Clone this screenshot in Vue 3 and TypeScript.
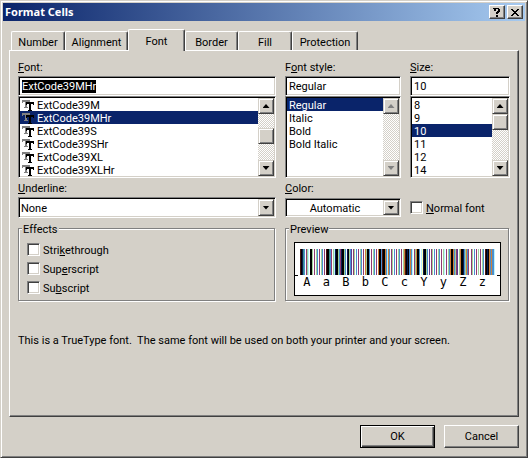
<script setup lang="ts">
import { nextTick, onMounted, ref } from 'vue'

const tabs = ['Number', 'Alignment', 'Font', 'Border', 'Fill', 'Protection']
const activeTab = ref('Font')

const fonts = ['ExtCode39M', 'ExtCode39MHr', 'ExtCode39S', 'ExtCode39SHr', 'ExtCode39XL', 'ExtCode39XLHr']
const styles = ['Regular', 'Italic', 'Bold', 'Bold Italic']
const sizes = ['8', '9', '10', '11', '12', '14']

const font = ref('ExtCode39MHr')
const fontStyle = ref('Regular')
const size = ref('10')
const underline = ref('None')
const color = ref('Automatic')
const normalFont = ref(false)
const strikethrough = ref(false)
const superscript = ref(false)
const subscript = ref(false)

const sample = ['A', 'a', 'B', 'b', 'C', 'c', 'Y', 'y', 'Z', 'z']

// One letter per pixel column of the bar code; '.' is a blank column.
const palette: Record<string, string> = {
  k: '#000000', r: '#4a1410', n: '#0a1a50', p: '#8f3a70', g: '#9fd09a',
  b: '#4a90d0', c: '#b8f4ff', o: '#d08038', y: '#ffffb0', t: '#3a8f8a', v: '#5a3a90',
}
const columns =
  'rkntb.pgc.kkg.p.gb.p.gb.p.rkkt' +
  'bp.gcnkkgbpnkkgb.nkgbv.pg.b.p.' +
  'gb.p.ogkkb.p.gb.p.okkbrkkobcob' +
  '.pg.b.p.gb.p.gorknkbobc.pgokkb' +
  '.cynkkgb.v.pg.b.p.gb.p.gc.p.gb' +
  'okkobgpv.gokknbgobp..pg.b.p.g.' +
  'p.gb.rknkobobbc'
const bars = columns
  .split('')
  .map((key, x) => ({ x, fill: palette[key] }))
  .filter((bar) => bar.fill)

const fontInput = ref<HTMLInputElement | null>(null)
onMounted(async () => {
  await nextTick()
  fontInput.value?.focus()
  fontInput.value?.select()
})
</script>

<template>
  <main class="dialog" role="dialog" aria-labelledby="title">
    <header class="titlebar">
      <h1 id="title">Format Cells</h1>
      <div class="caption">
        <button class="raised cap" type="button" aria-label="Help">
          <svg width="8" height="9" viewBox="0 0 8 9" shape-rendering="crispEdges">
            <path d="M1 0h5v1h1v3h-1v1h-1v1h-2v-2h1v-1h1v-2h-2v2h-2v-2h-1v-1h1zM3 7h2v2h-2z" />
          </svg>
        </button>
        <button class="raised cap" type="button" aria-label="Close">
          <svg width="8" height="7" viewBox="0 0 8 7" shape-rendering="crispEdges">
            <path d="M0 0h2v1h1v1h2v-1h1v-1h2v1h-1v1h-1v1h-1v1h1v1h1v1h1v1h-2v-1h-1v-1h-2v1h-1v1h-2v-1h1v-1h1v-1h1v-1h-1v-1h-1v-1h-1z" />
          </svg>
        </button>
      </div>
    </header>

    <div class="body">
      <div class="tabs" role="tablist">
        <button
          v-for="tab in tabs"
          :key="tab"
          class="tab"
          :class="{ active: tab === activeTab }"
          type="button"
          role="tab"
          :aria-selected="tab === activeTab"
          @click="activeTab = tab"
        >{{ tab }}</button>
      </div>

      <section class="panel" role="tabpanel">
        <div class="columns">
          <div class="field">
            <label for="font"><u>F</u>ont:</label>
            <input id="font" ref="fontInput" v-model="font" class="sunken text" type="text" />
            <div class="sunken list">
              <ul role="listbox" aria-label="Font">
                <li
                  v-for="name in fonts"
                  :key="name"
                  role="option"
                  :aria-selected="name === font"
                  @click="font = name"
                >
                  <svg width="13" height="11" viewBox="0 0 13 11" shape-rendering="crispEdges">
                    <path class="back" d="M0 0h8v3h-1v-1h-2v5h1v1h-4v-1h1v-5h-2v1h-1z" />
                    <path class="front" d="M4 2h8v3h-1v-1h-2v6h1v1h-4v-1h1v-6h-2v1h-1z" />
                  </svg>{{ name }}
                </li>
              </ul>
              <div class="scroll">
                <button class="raised" type="button" aria-label="Scroll fonts up"><i class="arrow up"></i></button>
                <div class="track middle"><span class="raised thumb"></span></div>
                <button class="raised" type="button" aria-label="Scroll fonts down"><i class="arrow"></i></button>
              </div>
            </div>
          </div>

          <div class="field">
            <label for="style">F<u>o</u>nt style:</label>
            <input id="style" v-model="fontStyle" class="sunken text" type="text" />
            <div class="sunken list">
              <ul role="listbox" aria-label="Font style">
                <li
                  v-for="name in styles"
                  :key="name"
                  role="option"
                  :aria-selected="name === fontStyle"
                  @click="fontStyle = name"
                >{{ name }}</li>
              </ul>
              <div class="scroll">
                <button class="raised" type="button" disabled aria-label="Scroll styles up"><i class="arrow up"></i></button>
                <div class="track"></div>
                <button class="raised" type="button" disabled aria-label="Scroll styles down"><i class="arrow"></i></button>
              </div>
            </div>
          </div>

          <div class="field">
            <label for="size"><u>S</u>ize:</label>
            <input id="size" v-model="size" class="sunken text" type="text" />
            <div class="sunken list">
              <ul role="listbox" aria-label="Size">
                <li
                  v-for="name in sizes"
                  :key="name"
                  role="option"
                  :aria-selected="name === size"
                  @click="size = name"
                >{{ name }}</li>
              </ul>
              <div class="scroll">
                <button class="raised" type="button" aria-label="Scroll sizes up"><i class="arrow up"></i></button>
                <div class="track"><span class="raised thumb"></span></div>
                <button class="raised" type="button" aria-label="Scroll sizes down"><i class="arrow"></i></button>
              </div>
            </div>
          </div>

          <div class="field">
            <label for="underline"><u>U</u>nderline:</label>
            <div class="sunken combo">
              <select id="underline" v-model="underline">
                <option>None</option>
                <option>Single</option>
                <option>Double</option>
              </select>
              <span class="raised drop"><i class="arrow"></i></span>
            </div>
          </div>

          <div class="field">
            <label for="color"><u>C</u>olor:</label>
            <div class="sunken combo centered">
              <select id="color" v-model="color">
                <option>Automatic</option>
              </select>
              <span class="raised drop"><i class="arrow"></i></span>
            </div>
          </div>

          <label class="check normal">
            <input v-model="normalFont" type="checkbox" />
            <span><u>N</u>ormal font</span>
          </label>

          <fieldset>
            <legend>Effects</legend>
            <div class="checks">
              <label class="check">
                <input v-model="strikethrough" type="checkbox" />
                <span>Stri<u>k</u>ethrough</span>
              </label>
              <label class="check">
                <input v-model="superscript" type="checkbox" />
                <span>Sup<u>e</u>rscript</span>
              </label>
              <label class="check">
                <input v-model="subscript" type="checkbox" />
                <span>Su<u>b</u>script</span>
              </label>
            </div>
          </fieldset>

          <fieldset class="wide">
            <legend>Preview</legend>
            <div class="preview">
              <svg class="bars" viewBox="0 0 195 26" preserveAspectRatio="none" shape-rendering="crispEdges" aria-hidden="true">
                <rect v-for="bar in bars" :key="bar.x" :x="bar.x" y="0" width="1" height="26" :fill="bar.fill" />
              </svg>
              <div class="ticks"></div>
              <div class="letters">
                <span v-for="letter in sample" :key="letter">{{ letter }}</span>
              </div>
            </div>
          </fieldset>
        </div>

        <p class="note">This is a TrueType font.&nbsp; The same font will be used on both your printer and your screen.</p>
      </section>

      <footer>
        <button class="push default" type="button">OK</button>
        <button class="push" type="button">Cancel</button>
      </footer>
    </div>
  </main>
</template>

<style>
body {
  margin: 0;
  background: #d4d0c8;
}
</style>

<style scoped>
.dialog,
.dialog * {
  box-sizing: border-box;
}

.dialog {
  display: flex;
  flex-direction: column;
  min-height: 100vh;
  padding: 2px;
  border: 1px solid;
  border-color: #d4d0c8 #404040 #404040 #d4d0c8;
  box-shadow: inset 1px 1px #fff, inset -1px -1px #808080;
  background: #d4d0c8;
  color: #000;
  font: 11px/13px Roboto, sans-serif;
}

button,
input,
select {
  margin: 0;
  border-radius: 0;
  outline: none;
  color: inherit;
  font: inherit;
  appearance: none;
}

u {
  text-underline-offset: 1px;
  text-decoration-thickness: 1px;
  text-decoration-skip-ink: none;
}

.raised {
  display: flex;
  align-items: center;
  justify-content: center;
  padding: 0;
  border: 1px solid;
  border-color: #d4d0c8 #404040 #404040 #d4d0c8;
  box-shadow: inset 1px 1px #fff, inset -1px -1px #808080;
  background: #d4d0c8;
}

.sunken {
  border: 1px solid;
  border-color: #808080 #fff #fff #808080;
  box-shadow: inset 1px 1px #000, inset -1px -1px #d4d0c8;
  background: #fff;
}

.titlebar {
  display: flex;
  align-items: center;
  justify-content: space-between;
  height: 18px;
  padding: 0 2px;
  background: linear-gradient(90deg, #0a246a, #a6caf0);
}

h1 {
  margin: 0;
  color: #fff;
  font: 700 11px/18px "Noto Sans", sans-serif;
}

.caption {
  display: flex;
  gap: 2px;
}

.cap {
  width: 16px;
  height: 14px;
  border-color: #fff #404040 #404040 #fff;
  box-shadow: inset -1px -1px #808080;
}

.body {
  display: flex;
  flex: 1;
  flex-direction: column;
  padding: 8px 6px 7px;
}

.tabs {
  display: grid;
  grid-template-columns: 54px 63px 57px 53px 54px 66px;
  align-items: end;
  height: 21px;
  padding-left: 2px;
}

.tab {
  height: 19px;
  padding: 2px 0 0;
  border: 1px solid;
  border-color: #fff #404040 transparent #fff;
  border-bottom: 0;
  border-radius: 2px 2px 0 0;
  box-shadow: inset -1px 0 #808080;
  background: #d4d0c8;
}

.tab.active {
  z-index: 1;
  height: 22px;
  margin-bottom: -1px;
}

.panel {
  flex: 1;
  padding: 9px 8px;
  border: 1px solid;
  border-color: #fff #404040 #404040 #fff;
  box-shadow: inset -1px -1px #808080;
}

.columns {
  display: grid;
  grid-template-columns: 258fr 116fr 100fr;
  column-gap: 9px;
  row-gap: 3px;
}

.field {
  display: flex;
  flex-direction: column;
  min-width: 0;
}

.field label {
  height: 16px;
  line-height: 16px;
}

.text {
  width: 100%;
  height: 20px;
  padding: 0 3px;
  line-height: 13px;
}

.text::selection {
  background: #000;
  color: #fff;
}

.list {
  display: flex;
  height: 82px;
  padding: 1px;
}

.list ul {
  flex: 1;
  margin: 0;
  padding: 0;
  list-style: none;
}

.list li {
  display: flex;
  align-items: center;
  gap: 2px;
  height: 13px;
  padding: 2px 0 0 2px;
  cursor: default;
}

.list li[aria-selected="true"] {
  background: #0a246a;
  color: #fff;
}

.back {
  fill: #808080;
}

.front {
  fill: #000;
}

.scroll {
  display: flex;
  flex-direction: column;
  width: 16px;
}

.scroll button {
  height: 16px;
}

.track {
  display: flex;
  flex: 1;
  flex-direction: column;
  background: repeating-conic-gradient(#d4d0c8 0 25%, #fff 0 50%) 0 0 / 2px 2px;
}

.track.middle {
  padding-top: 14px;
}

.thumb {
  height: 16px;
}

.arrow {
  width: 7px;
  height: 4px;
  background: #000;
  clip-path: polygon(0 0, 100% 0, 50% 100%);
}

.arrow.up {
  clip-path: polygon(0 100%, 100% 100%, 50% 0);
}

button:disabled .arrow {
  background: #808080;
}

.combo {
  display: flex;
  height: 21px;
  padding: 1px;
}

.combo select {
  flex: 1;
  min-width: 0;
  padding: 2px 1px 0;
  border: 0;
  background: #fff;
}

.drop {
  width: 16px;
  pointer-events: none;
}

.centered {
  height: 19px;
  margin-top: 1px;
}

.centered select {
  text-align: center;
  text-align-last: center;
}

.check {
  display: flex;
  align-items: center;
  gap: 3px;
  white-space: nowrap;
}

.check span {
  height: 13px;
  line-height: 15px;
}

.check input {
  flex: none;
  width: 13px;
  height: 13px;
  border: 1px solid;
  border-color: #808080 #fff #fff #808080;
  box-shadow: inset 1px 1px #404040, inset -1px -1px #d4d0c8;
  background: #fff;
}

.check input:checked {
  background: radial-gradient(#000 0 3px, #fff 3px);
}

.normal {
  align-self: end;
  height: 21px;
}

fieldset {
  min-width: 0;
  margin: 1px 1px 1px 0;
  padding: 0 8px;
  border: 1px solid #808080;
  box-shadow: 1px 1px #fff, inset 1px 1px #fff;
}

.wide {
  grid-column: span 2;
}

legend {
  height: 13px;
  margin-left: -5px;
  padding: 0 1px;
  background: #d4d0c8;
  line-height: 15px;
}

.checks {
  display: flex;
  flex-direction: column;
  gap: 6px;
  padding: 8px 0 6px;
}

.preview {
  height: 54px;
  margin: 7px -1px 4px 0;
  padding: 6px 5px 0;
  border: 1px solid #000;
  background: #fff;
}

.bars {
  display: block;
  width: 100%;
  height: 26px;
}

.ticks {
  height: 1px;
  margin: 0 -5px;
  border: solid #000;
  border-width: 0 3px;
}

.letters {
  display: grid;
  grid-template-columns: repeat(10, 1fr);
  margin: 0 3px 0 -3px;
  font: 12px/13px "DejaVu Sans Mono", monospace;
  text-align: center;
}

.note {
  margin: 32px 0 0;
}

footer {
  display: flex;
  justify-content: flex-end;
  gap: 9px;
  margin-top: 8px;
}

.push {
  width: 75px;
  height: 23px;
  padding: 0;
  border: 1px solid;
  border-color: #fff #404040 #404040 #fff;
  box-shadow: inset -1px -1px #808080;
  background: #d4d0c8;
}

.push.default {
  border-color: #000;
  box-shadow: inset 1px 1px #fff, inset -1px -1px #404040, inset -2px -2px #808080;
}
</style>
